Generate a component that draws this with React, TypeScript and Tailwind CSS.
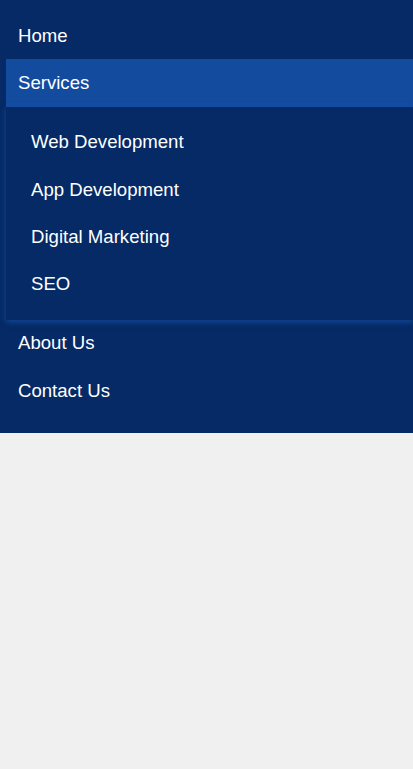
import React from 'react';

const font = { fontFamily: '"Liberation Sans", Arial, sans-serif' };

const subItems = ['Web Development', 'App Development', 'Digital Marketing', 'SEO'];

const NavItem: React.FC<{ label: string; active?: boolean; inset?: boolean }> = ({ label, active, inset }) => (
  <li>
    <a
      href="#"
      className={`flex items-center h-[47.3px] text-[18.6px] text-white ${inset ? 'pl-[25px]' : 'pl-3'} ${
        active ? 'bg-[#134c9f]' : ''
      }`}
    >
      {label}
    </a>
  </li>
);

export default function App() {
  return (
    <div className="min-h-[769px] bg-[#f0f0f0]" style={font}>
      <nav className="bg-[#052a65] pl-[6px] pt-3 pb-[19px]">
        <ul>
          <NavItem label="Home" />
          <NavItem label="Services" active />
          <li>
            {/* Submenu */}
            <ul className="relative bg-[#052a65] py-3 shadow-[0_2px_6px_rgba(25,85,175,0.7)]">
              {subItems.map((s) => (
                <NavItem key={s} label={s} inset />
              ))}
            </ul>
          </li>
          <NavItem label="About Us" />
          <NavItem label="Contact Us" />
        </ul>
      </nav>
    </div>
  );
}
